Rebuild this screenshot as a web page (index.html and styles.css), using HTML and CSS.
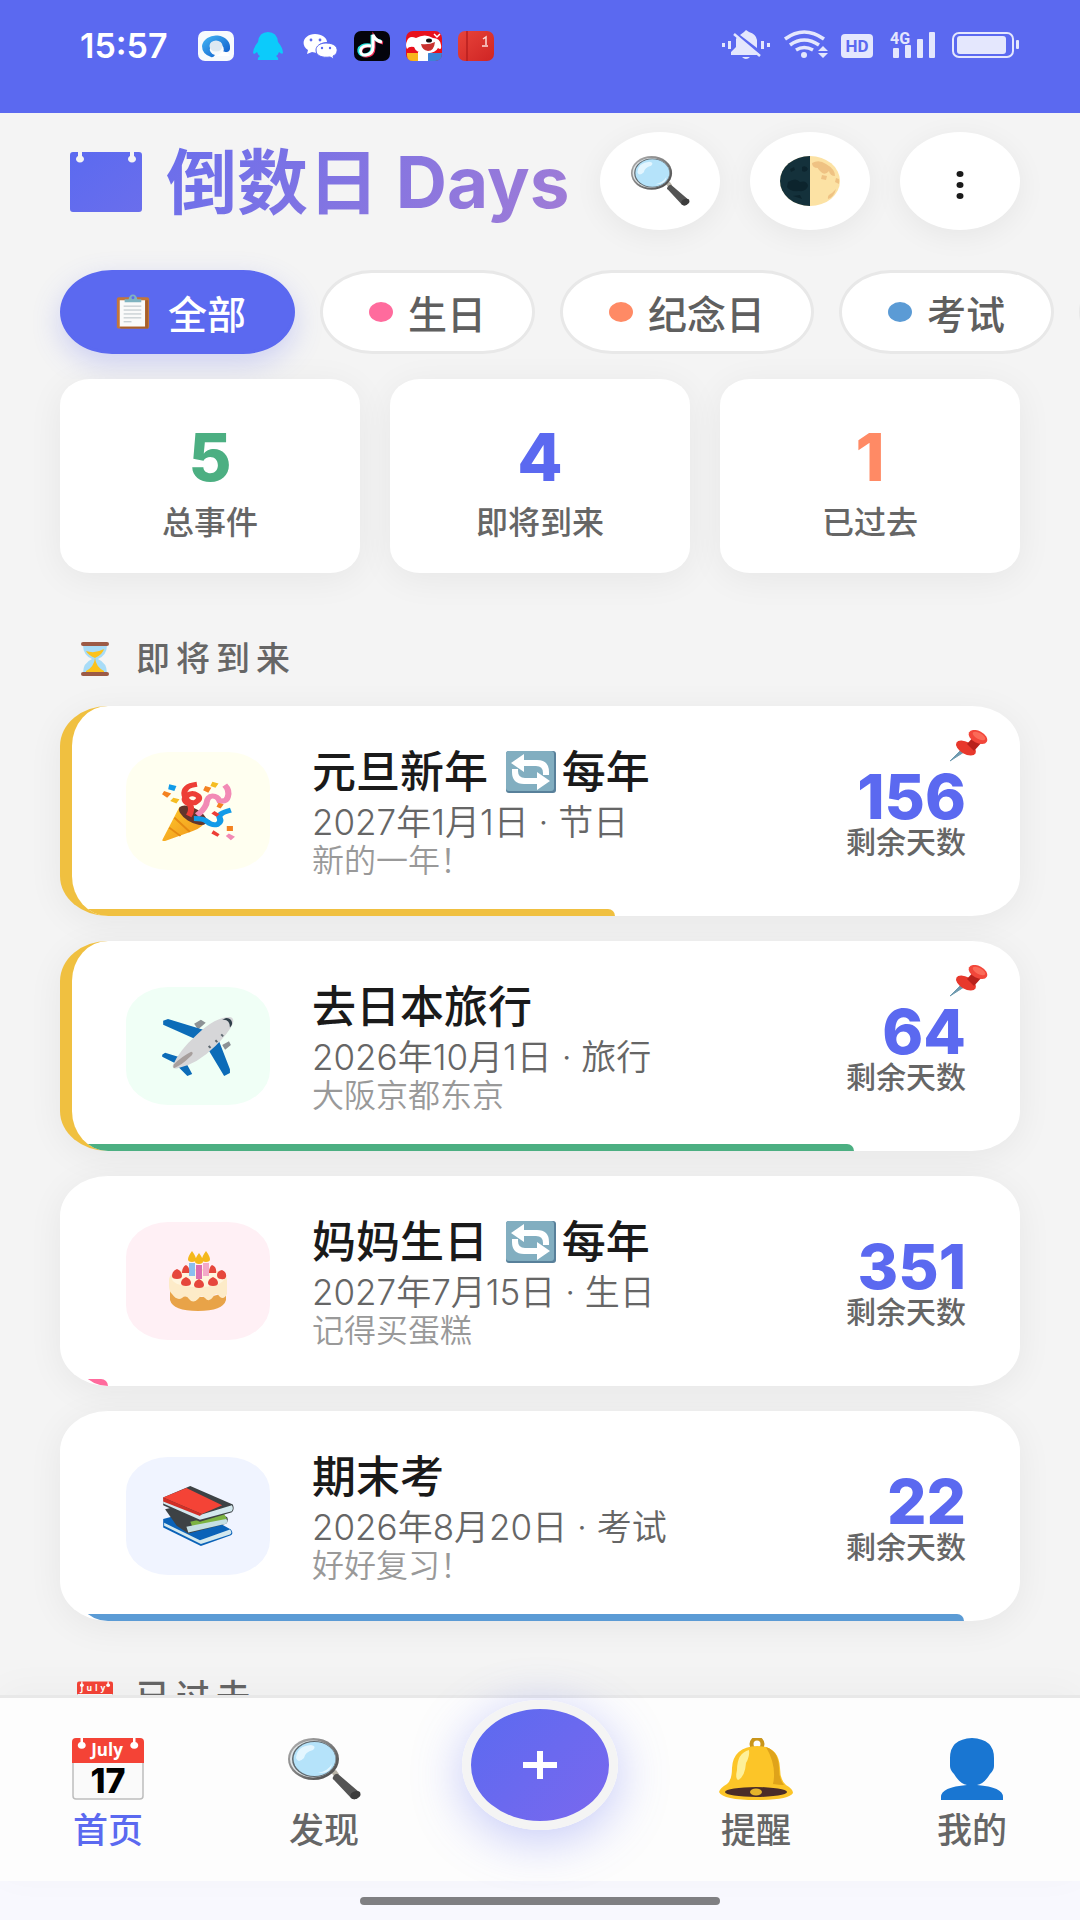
FILE: index.html
```html
<!DOCTYPE html>
<html lang="zh-CN">
<head>
<meta charset="utf-8">
<meta name="viewport" content="width=device-width, initial-scale=1">
<title>倒数日 Days</title>
<link rel="stylesheet" href="styles.css">
</head>
<body>
<svg class="sprite" aria-hidden="true">
  <defs>
    <linearGradient id="g-title" x1="0" y1="0" x2="1" y2="1"><stop offset="0" stop-color="#5b6af0"/><stop offset="1" stop-color="#6a6eec"/></linearGradient>
    <linearGradient id="g-qb" x1="0" y1="0" x2="1" y2="1"><stop offset="0" stop-color="#45b8f5"/><stop offset="1" stop-color="#0a55c8"/></linearGradient>
    <linearGradient id="g-red" x1="0" y1="0" x2="1" y2="1"><stop offset="0" stop-color="#e8443a"/><stop offset="1" stop-color="#cf2424"/></linearGradient>
    <linearGradient id="g-cone" x1="0" y1="0" x2="1" y2="1"><stop offset="0" stop-color="#fdc92a"/><stop offset="1" stop-color="#f0921c"/></linearGradient>
    <linearGradient id="g-rim" x1="0" y1="0" x2="1" y2="1"><stop offset="0" stop-color="#b5b5b5"/><stop offset="1" stop-color="#424242"/></linearGradient>
    <symbol id="i-search" viewBox="0 0 72 62">
      <path d="M43 34l5-2 3 4-4 4z" fill="#b9b4a8"/>
      <path d="M45 39q2-4 5-3l21 18q3 3 0 5-4 4-8 1L46 42q-2-1-1-3z" fill="#545454"/>
      <path d="M63 60q-2-4 2-6t7 0q1 3-1 5-4 4-8 1z" fill="#3c3c3c"/>
      <ellipse cx="25.500" cy="21" rx="25.500" ry="21" fill="url(#g-rim)"/>
      <ellipse cx="25" cy="21" rx="23" ry="18.500" fill="#dfe4e6"/>
      <ellipse cx="26" cy="21" rx="22" ry="18" fill="#5f6a70"/>
      <ellipse cx="26.500" cy="21" rx="21" ry="17" fill="#b5e3fa"/>
      <path d="M8 20q1-12 15-13 6 1 2 5-8 2-9 8-6 6-8 0z" fill="#e3f6ff"/>
      <path d="M30 35q10-2 14-9-1 10-14 9z" fill="#e3f6ff"/>
    </symbol>
    <symbol id="i-moon" viewBox="0 0 60 50">
      <ellipse cx="30" cy="25" rx="30" ry="25" fill="#fce2a4"/>
      <path d="M30 0a30 25 0 0 0 0 50z" fill="#14313b"/>
      <path d="M32 7q7-4 14 1 9 5 9 12-5 0-6-5-4 5-8 1t-3-4q-6 0-6-5zM52 37l4-4q-2 8-8 10-1-4 4-6zM42 19l5 1-1 4-5-1zM56 22l3 1v5l-4-2z" fill="#efc283"/>
      <path d="M8 26q8-5 12 0 7-2 8 4-2 6-9 5-9 1-12-4zM22 11q4-2 6 2-2 4-6 2zM10 13l4-2 1 3-4 2zM13 40l7-1 2 4z" fill="#0c242d"/>
    </symbol>
    <symbol id="i-cal" viewBox="0 0 72 62">
      <path d="M1 16V58q0 3 3 3H68q3 0 3-3V16z" fill="#fafafa" stroke="#bdbdbd" stroke-width="1.500"/>
      <path d="M0 25V4q0-4 4-4H68q4 0 4 4V25z" fill="#f44336"/>
      <path d="M8.500 0h2.500v4a4 3.500 0 1 1-2.500 0zM61 0h2.500v4a4 3.500 0 1 1-2.500 0z" fill="#fff"/>
      <text x="35" y="18" text-anchor="middle" font-family="Open Sans, sans-serif" font-weight="700" font-size="17" fill="#fff">July</text>
      <text x="36" y="55" text-anchor="middle" font-family="Inter, sans-serif" font-weight="800" font-size="34" fill="#000">17</text>
    </symbol>
    <symbol id="i-clip" viewBox="0 0 45 36">
      <rect x="8" y="3" width="33" height="32" rx="2" fill="#c3763a"/>
      <path d="M11 6h26v27H11z" fill="#fafafa"/>
      <path d="M37 6v27H11l1 2h28V6z" fill="#a8602b"/>
      <path d="M15 12h18M15 16h18M15 20h18M15 24h18M15 28h8" stroke="#b5bec4" stroke-width="1"/>
      <path d="M16 8V5h4q1-5 4.500-5T29 5h4v3z" fill="#7fb3c0"/>
      <circle cx="24.500" cy="3.500" r="1.500" fill="#5b69f0"/>
    </symbol>
    <symbol id="i-hour" viewBox="0 0 30 34">
      <path d="M3 3h24q0 10-9 14 9 4 9 14H3q0-10 9-14Q3 13 3 3z" fill="#a8dcf7"/>
      <path d="M6 9q9 3 18-2-1 5-9 9-7-3-9-7zM15 16q1 9 9 13v2H6v-2q8-4 9-13z" fill="#fcc21b"/>
      <rect x="1" y="0" width="28" height="4" rx="2" fill="#9c5a45"/>
      <rect x="1" y="30" width="28" height="4" rx="2" fill="#9c5a45"/>
    </symbol>
    <symbol id="i-repeat" viewBox="0 0 50 42">
      <rect width="50" height="42" rx="3" fill="#58809a"/>
      <rect x="0" y="0" width="48" height="40" rx="3" fill="#82aec0"/>
      <path d="M5 12L18 3v6h13q12 0 12 12v3h-6v-2q0-7-7-7H18v6z" fill="#fff"/>
      <path d="M44 30L31 39v-6H18Q6 33 6 21v-3h6v2q0 7 7 7h12v-6z" fill="#fff"/>
    </symbol>
    <symbol id="i-party" viewBox="0 0 72 72" preserveAspectRatio="none">
      <path d="M18 31l27 15q-4 10-14 14L4 72q-4 1-2-3z" fill="url(#g-cone)"/>
      <path d="M13 44l15 17M8 56l11 10" stroke="#e58a12" stroke-width="2"/>
      <ellipse cx="31" cy="41" rx="16" ry="8" transform="rotate(38 31 41)" fill="#63352c"/>
      <path d="M27 42q4-7 1-14-8-5-3-10t10-1-2 9q-8 1-10-9-2-11 12-13" fill="none" stroke="#ed3e36" stroke-width="6"/>
      <path d="M35 41q6-5 9-13 1-10 6-10t7 6q7 1 8-5 2-8-3-14" fill="none" stroke="#f28ab5" stroke-width="6"/>
      <path d="M32 45q10 0 13 4 5 5 10 3 4-3 2-8t11-9" fill="none" stroke="#129be8" stroke-width="6"/>
      <path d="M8 4l7 2-2 6-6-2z" fill="#129be8"/>
      <path d="M3 12l7 3-4 5-5-4zM43 6l6 2-3 6-5-3zM56 26l5 2-3 5-4-2zM64 54h6v6h-6z" fill="#f48220"/>
      <path d="M50 1l6 2-3 5-5-2zM12 20l6 2-3 5-6-3z" fill="#f5bd22"/>
      <path d="M52 36l5 4-3 3-5-4zM51 59l6 5-2 3-6-4z" fill="#ed3e36"/>
      <path d="M66 63l6 4-4 4-5-5z" fill="#f28ab5"/>
    </symbol>
    <symbol id="i-plane" viewBox="0 0 74 62">
      <path d="M33 8l7-4 5 3-8 7zM62 30l7-4 2 4-6 5z" fill="#8c9295"/>
      <path d="M1 5l5-2 39 12-8 10L1 9zM58 24l-12 8 18 30 6-3V55zM0 40l3-2 16 5-5 6L0 42zM24 47l-8 5 10 10 5-2z" fill="#0c6cb8"/>
      <path d="M70 1q5 1 3 7-4 9-18 23Q36 50 16 54q-6 1-5-3 6-15 25-32Q55 1 70 1z" fill="#d6d6d8"/>
      <path d="M12 50q8-8 18-13 4 1-2 6-8 8-16 11-1-2 0-4z" fill="#a79f9d"/>
      <path d="M62 4q8-1 8 8 3-3 2-6-1-4-6-4z" fill="#30404a"/>
      <path d="M61 19l2 2M55 25l2 2M48 31l2 2" stroke="#5d6870" stroke-width="2"/>
    </symbol>
    <symbol id="i-cake" viewBox="0 0 58 60">
      <path d="M1 38q4 8 28 8t28-8v11Q54 60 29 60T1 49z" fill="#e8a348"/>
      <path d="M0 29q0-11 29-11t29 11v14q-3 6-7 3-4-6-7 0-4 6-8 1-4-4-7 1-5 5-9 0-3-5-7-1-5 3-10-4-3-3-3-8z" fill="#fdebc8"/>
      <ellipse cx="29" cy="28" rx="26" ry="8" fill="#fff5de"/>
      <path d="M20 12h6v13h-6z" fill="#8abef0"/><path d="M27 14h6v14h-6z" fill="#dd6cae"/><path d="M34 12h6v13h-6z" fill="#f3a9c8"/>
      <path d="M23 0q8 11 0 11t0-11zM30 2q8 11 0 11t0-11zM37 0q8 11 0 11t0-11z" fill="#f4b81c"/>
      <path d="M8 18q5 2 5 7 0 3-5 3t-5-3q0-5 5-7zM17 14q4 2 3 8h-7q0-6 4-8zM43 14q5 2 4 8h-7q0-6 3-8zM53 19q5 2 4 7-1 3-5 2-4 0-4-4 0-4 5-5zM17 26q5 2 5 6 0 3-5 3t-5-3q0-4 5-6zM30 28q5 2 5 6 0 3-5 3t-5-3q0-4 5-6zM44 26q5 2 5 6 0 3-5 3t-5-3q0-4 5-6z" fill="#e6473c"/>
    </symbol>
    <symbol id="i-books" viewBox="0 0 74 62">
      <path d="M1 34l34-9 36 20q3 4 0 6L40 62 1 43z" fill="#0a62b8"/>
      <path d="M2 38l37 18 31-11q3 3 0 5L40 60 2 41z" fill="#d3e8ee"/>
      <path d="M3 24l25-6 39 14q2 4-1 7L27 49 15 41z" fill="#3d4245"/>
      <path d="M29 37l35-8 3 5-35 10z" fill="#7cb342"/>
      <path d="M25 42l41-8q3 2 0 5L27 48z" fill="#c5dfe3"/>
      <path d="M1 12L29 0l44 19q2 5-1 8L39 37 1 20z" fill="#3d4245"/>
      <path d="M1 12L25 2l37 18-21 9z" fill="#f44336"/>
      <path d="M1 13l38 17 33-10q2 3 0 6L39 35 1 18z" fill="#d3e8ee"/>
      <path d="M1 12l40 17-2 2L1 16z" fill="#d12f26"/>
    </symbol>
    <symbol id="i-pin" viewBox="0 0 38 32">
      <path d="M0 31L11 20l3 2z" fill="#6f9bb0" stroke="#6f9bb0"/>
      <ellipse cx="16" cy="18" rx="11" ry="6" transform="rotate(30 16 18)" fill="#e8382c"/>
      <path d="M17 14l8-9 8 6-9 10z" fill="#b9211b"/>
      <ellipse cx="28" cy="7" rx="10" ry="6" transform="rotate(28 28 7)" fill="#f2463a"/>
      <ellipse cx="29" cy="6" rx="7" ry="3" transform="rotate(28 29 6)" fill="#fb6a58"/>
    </symbol>
    <symbol id="i-bell" viewBox="0 0 74 62">
      <circle cx="38" cy="6" r="5.500" fill="none" stroke="#c9951a" stroke-width="4"/>
      <path d="M0 54q1-4 8-8 5-4 5-16Q14 9 38 8q22 0 23 22 0 12 6 17 7 4 7 8-4 7-37 7T0 54z" fill="#fcc528"/>
      <path d="M47 9q13 4 13 22 0 10 5 16-5 0-11-1 4-18-7-37z" fill="#dfa31a"/>
      <path d="M18 32q0-17 12-20 1 6-3 13-1 14-8 17-3-2-1-10z" fill="#fef09a"/>
      <ellipse cx="37" cy="54" rx="31" ry="5" fill="#4a2c28"/>
      <ellipse cx="37" cy="54" rx="6" ry="3.500" fill="#e5b32a"/>
    </symbol>
    <symbol id="i-user" viewBox="0 0 62 62">
      <path d="M31 0Q53 1 53 20v8q0 4-4 8-6 10-13 11Q62 49 62 59v3H0v-3q0-10 26-12-7-1-13-11-4-4-4-8v-8Q9 1 31 0z" fill="#1976d2"/>
    </symbol>
  </defs>
</svg>

<div class="app">
  <div class="status">
    <div class="status-left">
      <span class="clock">15:57</span>
      <svg class="app-icon" viewBox="0 0 36 30"><rect width="36" height="30" rx="7" fill="#f7fafd"/><path d="M4 15a14 12 0 0 1 28 3q-1 4-7 3a7 6 0 1 0-8 3q-2 3-4 2-9-3-9-11z" fill="url(#g-qb)"/><ellipse cx="18" cy="15" rx="6.500" ry="5.500" fill="#dde9f2"/><path d="M16 25q5 0 8-5 6 1 8 5z" fill="#fff"/></svg>
      <svg class="app-icon" viewBox="0 0 36 30"><path d="M18 1q9 0 10 10 5 6 5 11-1 2-4-1-1 3-3 4 3 2 2 4H8q-1-2 2-4-2-1-3-4-3 3-4 1 0-5 5-11Q9 1 18 1z" fill="#0ccbfb"/></svg>
      <svg class="app-icon" viewBox="0 0 36 30"><path d="M13 3c7 0 12 4 12 8-8 0-12 6-10 11l-5-1-5 2 1-4c-9-6-3-16 7-16z" fill="#fff"/><path d="M24 12c14 0 13 11 7 13l1 3-4-2c-8 1-14-1-14-7 0-4 4-7 10-7z" fill="#fff" stroke="#5b69f0"/><g fill="#5b69f0"><circle cx="9" cy="9" r="1.400"/><circle cx="18" cy="9" r="1.400"/><circle cx="20" cy="17" r="1.200"/><circle cx="28" cy="17" r="1.200"/></g></svg>
      <svg class="app-icon" viewBox="0 0 36 30"><rect width="36" height="30" rx="7" fill="#04040c"/><path d="M18 15c-14-2-14 11-5 10q7-1 7-8V6q3 5 9 6" fill="none" stroke="#f32d55" stroke-width="3"/><path d="M16 14c-14-2-14 11-5 10q7-1 7-8V4q3 6 9 6" fill="none" stroke="#27e6e3" stroke-width="3"/><path d="M17 15c-13-2-13 10-5 9q7-1 7-8V4q3 6 9 7" fill="none" stroke="#fff" stroke-width="3"/></svg>
      <svg class="app-icon" viewBox="0 0 36 30"><rect width="36" height="30" rx="7" fill="#e8101c"/><path d="M1 22h11v8H7q-6 0-6-6z" fill="#f9b41c"/><path d="M12 21h10v9H12z" fill="#fff"/><path d="M22 22h14q0 8-7 8h-7z" fill="#3b83d6"/><path d="M1 10Q3 4 10 7q9-5 17 0 7 0 8 7 1 6-3 3-3 6-13 5-9 0-11-6-5-1-7 2-2-4 0-8z" fill="#fff"/><path d="M15 13q8 1 14-2-1 9-7 9-6-1-7-7z" fill="#c9322f"/><ellipse cx="23" cy="9.500" rx="3" ry="2" fill="#111"/><path d="M28 3l3 3 3-3" stroke="#fff" stroke-width="1.500" fill="none"/></svg>
      <svg class="app-icon" viewBox="0 0 36 30"><rect width="36" height="30" rx="7" fill="url(#g-red)"/><path d="M9 0v30" stroke="#b71f1f" stroke-width="1.500"/><path d="M25 8l3-2v8M24 15h6" stroke="#fbdcd8" stroke-width="1.500" fill="none"/></svg>
    </div>
    <svg class="status-right" viewBox="0 0 298 30" role="img" aria-label="静音 WiFi HD 4G 电池">
      <g fill="#e4e7fd">
        <rect x="0" y="13" width="3" height="4"/><rect x="6" y="11" width="3" height="8"/><rect x="39" y="11" width="3" height="8"/><rect x="45" y="13" width="3" height="4"/>
        <path d="M15 7l22 17q-1 1-3 1H9v-3l5-5V9zM18 5l4-3 2-2 3 2q7 2 8 8v8zM20 27h8q-4 4-8 0z"/>
        <path d="M12 4l26 22" stroke="#e4e7fd" stroke-width="2.500"/>
        <circle cx="82" cy="25" r="3"/><path d="M96 21l5-5 5 5zM96 23l5 5 5-5z"/>
        <rect x="119" y="4" width="32" height="24" rx="4"/>
        <rect x="171" y="18" width="6" height="10" rx="1"/><rect x="183" y="15" width="6" height="13" rx="1"/><rect x="195" y="9" width="6" height="19" rx="1"/><rect x="207" y="2" width="6" height="26" rx="1"/>
        <rect x="235" y="6" width="49" height="18" rx="3"/><rect x="294" y="10" width="3" height="9" rx="1"/>
      </g>
      <g fill="none" stroke="#e4e7fd">
        <path d="M63 9q19-14 39 0M68 15q14-10 29 0M74 20q8-5 17 0" stroke-width="3.500"/>
        <rect x="231" y="3" width="60" height="24" rx="6" stroke-width="2"/>
      </g>
      <text x="135" y="22" text-anchor="middle" font-family="Roboto, sans-serif" font-weight="700" font-size="17" fill="#5b69f0">HD</text>
      <text x="168" y="14" font-family="Roboto, sans-serif" font-weight="700" font-size="16" fill="#e4e7fd">4G</text>
    </svg>
  </div>

  <main class="page">
    <header class="top">
      <h1 class="brand">
        <svg class="brand-icon" viewBox="0 0 72 60" aria-hidden="true"><path d="M3 0H8v4a4 3.500 0 1 0 4 0V0H60v4a4 3.500 0 1 0 4 0V0h5q3 0 3 3V57q0 3-3 3H3q-3 0-3-3V3q0-3 3-3z" fill="url(#g-title)"/></svg>
        <span class="brand-text">倒数日 Days</span>
      </h1>
      <div class="tools">
        <button class="round" aria-label="搜索"><svg class="round-icon"><use href="#i-search"/></svg></button>
        <button class="round" aria-label="主题"><svg class="round-icon"><use href="#i-moon"/></svg></button>
        <button class="round round-more" aria-label="更多"><svg class="round-dots" viewBox="0 0 8 30"><ellipse cx="4" cy="4" rx="3.500" ry="3"/><ellipse cx="4" cy="15" rx="3.500" ry="3"/><ellipse cx="4" cy="26" rx="3.500" ry="3"/></svg></button>
      </div>
    </header>

    <div class="chips">
      <button class="chip chip-active"><svg class="chip-icon"><use href="#i-clip"/></svg>全部</button>
      <button class="chip"><span class="dot dot-birthday"></span>生日</button>
      <button class="chip"><span class="dot dot-memorial"></span>纪念日</button>
      <button class="chip"><span class="dot dot-exam"></span>考试</button>
      <button class="chip"><span class="dot dot-travel"></span>旅行</button>
    </div>

    <section class="stats">
      <div class="stat"><strong class="stat-num green">5</strong><span class="stat-label">总事件</span></div>
      <div class="stat"><strong class="stat-num blue">4</strong><span class="stat-label">即将到来</span></div>
      <div class="stat"><strong class="stat-num orange">1</strong><span class="stat-label">已过去</span></div>
    </section>

    <h2 class="section-title"><svg class="section-icon"><use href="#i-hour"/></svg>即将到来</h2>
    <section class="events">
      <article class="event pinned">
        <div class="avatar avatar-festival"><svg class="avatar-icon"><use href="#i-party"/></svg></div>
        <div class="info">
          <h3 class="name">元旦新年 <svg class="repeat"><use href="#i-repeat"/></svg>每年</h3>
          <p class="date">2027年1月1日 · 节日</p>
          <p class="note">新的一年！</p>
        </div>
        <div class="count"><strong class="days">156</strong><span class="days-label">剩余天数</span></div>
        <svg class="pin"><use href="#i-pin"/></svg>
        <div class="progress progress-festival" style="width:57.3%"></div>
      </article>
      <article class="event pinned">
        <div class="avatar avatar-travel"><svg class="avatar-icon"><use href="#i-plane"/></svg></div>
        <div class="info">
          <h3 class="name">去日本旅行</h3>
          <p class="date">2026年10月1日 · 旅行</p>
          <p class="note">大阪京都东京</p>
        </div>
        <div class="count"><strong class="days">64</strong><span class="days-label">剩余天数</span></div>
        <svg class="pin"><use href="#i-pin"/></svg>
        <div class="progress progress-travel" style="width:82.5%"></div>
      </article>
      <article class="event">
        <div class="avatar avatar-birthday"><svg class="avatar-icon"><use href="#i-cake"/></svg></div>
        <div class="info">
          <h3 class="name">妈妈生日 <svg class="repeat"><use href="#i-repeat"/></svg>每年</h3>
          <p class="date">2027年7月15日 · 生日</p>
          <p class="note">记得买蛋糕</p>
        </div>
        <div class="count"><strong class="days">351</strong><span class="days-label">剩余天数</span></div>
        <div class="progress progress-birthday" style="width:3.8%"></div>
      </article>
      <article class="event">
        <div class="avatar avatar-exam"><svg class="avatar-icon"><use href="#i-books"/></svg></div>
        <div class="info">
          <h3 class="name">期末考</h3>
          <p class="date">2026年8月20日 · 考试</p>
          <p class="note">好好复习！</p>
        </div>
        <div class="count"><strong class="days">22</strong><span class="days-label">剩余天数</span></div>
        <div class="progress progress-exam" style="width:94.1%"></div>
      </article>
    </section>
    <h2 class="section-title section-past"><svg class="section-icon"><use href="#i-cal"/></svg>已过去</h2>
  </main>

  <nav class="tabs">
    <a class="tab tab-active" href="#home"><svg class="tab-icon"><use href="#i-cal"/></svg>首页</a>
    <a class="tab" href="#discover"><svg class="tab-icon"><use href="#i-search"/></svg>发现</a>
    <button class="fab" aria-label="添加"><svg class="fab-icon" viewBox="0 0 34 28"><path d="M0 14H34M17 0V28" stroke="#fff" stroke-width="6"/></svg></button>
    <a class="tab" href="#remind"><svg class="tab-icon"><use href="#i-bell"/></svg>提醒</a>
    <a class="tab" href="#mine"><svg class="tab-icon"><use href="#i-user"/></svg>我的</a>
  </nav>
  <div class="home-bar"><span class="home-handle"></span></div>
</div>
</body>
</html>
```
FILE: styles.css
```css
* { box-sizing: border-box; }

:root {
  --primary: #5b69f0;
  --green: #4caf82;
  --orange: #ff8a65;
  --pink: #ff6b9d;
  --sky: #5b9bd5;
  --gold: #f0c040;
  --muted: #666;
  --card-shadow: 0 6px 36px rgba(0, 0, 0, 0.06);
}

body {
  margin: 0;
  background: #f4f4f4;
  color: #1a1a1a;
  font-family: Inter, "Noto Sans CJK SC", sans-serif;
}

h1, h2, h3, p { margin: 0; }

button {
  font: inherit;
  border: 0;
  padding: 0;
}

.sprite {
  position: absolute;
  width: 0;
  height: 0;
}

.app {
  display: flex;
  flex-direction: column;
  height: 100vh;
}

/* Status bar */
.status {
  display: flex;
  flex: none;
  align-items: flex-start;
  justify-content: space-between;
  padding: 30px 60px 51px 80px;
  background: var(--primary);
}

.status-left {
  display: flex;
  align-items: center;
  gap: 16px;
}

.clock {
  margin-right: 14px;
  color: #fff;
  font-size: 34px;
  font-weight: 600;
  line-height: 32px;
}

.app-icon {
  width: 36px;
  height: 30px;
}

.status-right {
  width: 298px;
  height: 30px;
}

/* Page */
.page {
  flex: 1;
  min-height: 0;
  overflow-y: auto;
  padding: 19px 60px 0;
  scrollbar-width: none;
}

.top {
  display: flex;
  align-items: center;
  justify-content: space-between;
  gap: 20px;
}

.brand {
  display: flex;
  align-items: center;
  gap: 24px;
  padding: 2px 0 0 10px;
  white-space: nowrap;
}

.brand-icon {
  width: 72px;
  height: 60px;
}

.brand-text {
  background: linear-gradient(120deg, #6a6eec, #a07cd6);
  background-clip: text;
  color: transparent;
  font-size: 71px;
  font-weight: 700;
  line-height: 96px;
}

.tools {
  display: flex;
  gap: 30px;
}

.round {
  display: flex;
  align-items: center;
  justify-content: center;
  width: 120px;
  height: 98px;
  border-radius: 50%;
  background: #fff;
  box-shadow: 0 6px 30px rgba(0, 0, 0, 0.06);
}

.round-more { padding-top: 8px; }

.round-icon {
  width: 60px;
  height: 50px;
}

.round-dots {
  width: 8px;
  height: 30px;
  fill: #1a1a1a;
}

.chips {
  display: flex;
  gap: 25px;
  margin: 16px -60px 0;
  padding: 24px 60px 25px;
  overflow-x: auto;
  scrollbar-width: none;
}

.chip {
  display: flex;
  flex: none;
  align-items: center;
  gap: 15px;
  height: 84px;
  padding: 0 46px;
  border: 3px solid #e8e8e8;
  border-radius: 52px / 42px;
  background: #fff;
  color: #5f5f5f;
  font-size: 39px;
  font-weight: 500;
}

.chip-active {
  border-color: var(--primary);
  background: var(--primary);
  color: #fff;
  box-shadow: 0 10px 28px rgba(91, 105, 240, 0.25);
}

.chip-icon {
  width: 44px;
  height: 36px;
}

.dot {
  width: 24px;
  height: 20px;
  border-radius: 50%;
}

.dot-birthday { background: var(--pink); }
.dot-memorial { background: var(--orange); }
.dot-exam { background: var(--sky); }
.dot-travel { background: var(--green); }

.stats {
  display: grid;
  grid-template-columns: repeat(3, 1fr);
  gap: 30px;
}

.stat {
  display: flex;
  flex-direction: column;
  align-items: center;
  padding: 43px 0 26px;
  border-radius: 30px / 26px;
  background: #fff;
  box-shadow: var(--card-shadow);
}

.stat-num {
  font-size: 66px;
  font-weight: 800;
  line-height: 70px;
}

.stat-label {
  padding-top: 7px;
  color: var(--muted);
  font-size: 32px;
  font-weight: 500;
  line-height: 48px;
}

.green { color: var(--green); }
.blue { color: var(--primary); }
.orange { color: var(--orange); }

.section-title {
  display: flex;
  align-items: center;
  gap: 26px;
  margin: 62px 0 23px;
  padding-left: 20px;
  color: var(--muted);
  font-size: 34px;
  font-weight: 500;
  line-height: 48px;
  letter-spacing: 6px;
}

.section-icon {
  width: 30px;
  height: 34px;
}

.section-past {
  gap: 23px;
  margin-top: 52px;
  padding-left: 17px;
}

.section-past .section-icon { width: 36px; }

/* Event cards */
.events {
  display: flex;
  flex-direction: column;
  gap: 25px;
}

.event {
  position: relative;
  display: flex;
  align-items: center;
  gap: 42px;
  min-height: 210px;
  padding: 0 54px;
  overflow: hidden;
  border-left: 12px solid transparent;
  border-radius: 48px / 40px;
  background: #fff;
  box-shadow: var(--card-shadow);
}

.pinned { border-left-color: var(--gold); }

.avatar {
  display: flex;
  flex: none;
  align-items: center;
  justify-content: center;
  width: 144px;
  height: 118px;
  border-radius: 42px / 35px;
}

.avatar-festival { background: #fffff0; }
.avatar-travel { background: #f0fff6; }
.avatar-birthday { background: #fff0f5; }
.avatar-exam { background: #f0f4ff; }

.avatar-icon {
  width: 74px;
  height: 60px;
}

.info {
  flex: 1;
  min-width: 0;
  padding-top: 2px;
}

.name {
  display: flex;
  align-items: center;
  gap: 6px;
  margin-bottom: 2px;
  font-size: 44px;
  font-weight: 500;
  line-height: 56px;
  white-space: pre;
}

.repeat {
  width: 50px;
  height: 42px;
}

.date {
  color: var(--muted);
  font-size: 35px;
  font-weight: 350;
  line-height: 40px;
}

.note {
  color: #999;
  font-size: 32px;
  font-weight: 350;
  line-height: 38px;
}

.count {
  display: flex;
  flex-direction: column;
  align-items: flex-end;
  padding-top: 7px;
}

.days {
  color: var(--primary);
  font-size: 62px;
  font-weight: 800;
  line-height: 54px;
}

.days-label {
  color: var(--muted);
  font-size: 30px;
  font-weight: 500;
  line-height: 36px;
}

.pin {
  position: absolute;
  top: 24px;
  right: 32px;
  width: 38px;
  height: 32px;
}

.progress {
  position: absolute;
  bottom: 0;
  left: 0;
  height: 7px;
  border-radius: 0 9px 0 0;
}

.progress-festival { background: var(--gold); }
.progress-travel { background: var(--green); }
.progress-birthday { background: var(--pink); }
.progress-exam { background: var(--sky); }

/* Bottom navigation */
.tabs {
  position: relative;
  display: grid;
  flex: none;
  grid-template-columns: repeat(5, 1fr);
  align-items: start;
  justify-items: center;
  border-top: 3px solid #e8e8e8;
  background: #fdfdfd;
  box-shadow: 0 -6px 36px rgba(0, 0, 0, 0.03);
}

.tab {
  display: flex;
  flex-direction: column;
  align-items: center;
  padding: 40px 0 21px;
  color: var(--muted);
  font-size: 35px;
  font-weight: 500;
  line-height: 60px;
  text-decoration: none;
}

.tab-active { color: var(--primary); }

.tab-icon {
  width: 74px;
  height: 62px;
}

.fab {
  display: flex;
  align-items: center;
  justify-content: center;
  width: 156px;
  height: 130px;
  margin-top: 2px;
  border: 9px solid #f4f4f4;
  border-radius: 50%;
  background: linear-gradient(135deg, #5b6af0, #7a68ee);
  box-shadow: 0 10px 50px rgba(91, 105, 240, 0.35);
}

.fab-icon {
  width: 34px;
  height: 28px;
}

.home-bar {
  display: flex;
  flex: none;
  align-items: center;
  justify-content: center;
  height: 39px;
  background: #f8f8fe;
}

.home-handle {
  width: 33.333%;
  height: 8px;
  border-radius: 4px;
  background: #7f7f82;
}
```
